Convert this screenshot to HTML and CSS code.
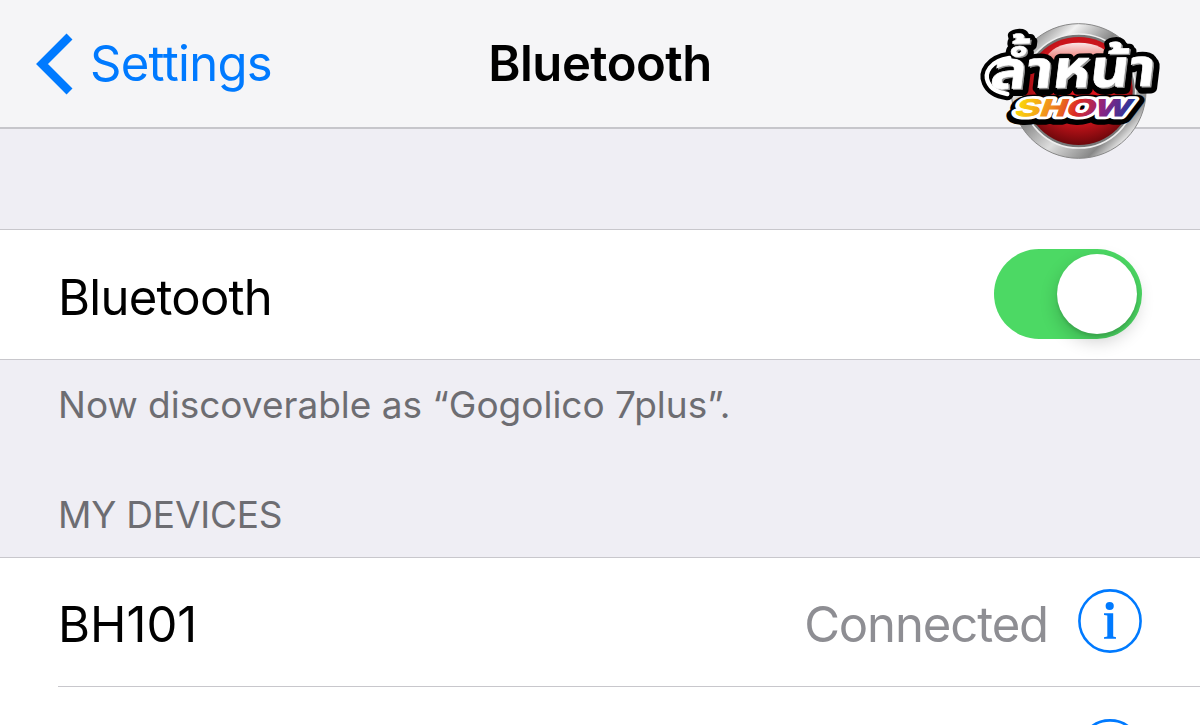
FILE: index.html
```html
<!DOCTYPE html>
<html lang="en">
<head>
    <meta charset="UTF-8">
    <meta name="viewport" content="width=device-width, initial-scale=1.0">
    <title>Bluetooth</title>
    <link rel="stylesheet" href="styles.css">
</head>
<body>
    <header class="navbar">
        <a href="#" class="back-link">
            <svg class="back-icon" viewBox="0 0 38 62" width="38" height="62">
                <path d="M34.5 3.5 7 31 34.5 58.5" fill="none" stroke="currentColor" stroke-width="8.4"/>
            </svg>
            <span class="back-label">Settings</span>
        </a>
        <h1 class="title">Bluetooth</h1>
        <svg class="show-logo" viewBox="0 0 600 480" width="200" height="160">
            <defs>
                <linearGradient id="chrome" x1="0" y1="0" x2="1" y2="1">
                    <stop offset="0.1" stop-color="#777"/>
                    <stop offset="0.25" stop-color="#f2f2f2"/>
                    <stop offset="0.42" stop-color="#888"/>
                    <stop offset="0.6" stop-color="#ddd"/>
                    <stop offset="0.78" stop-color="#888"/>
                    <stop offset="0.86" stop-color="#eee"/>
                    <stop offset="1" stop-color="#666"/>
                </linearGradient>
                <radialGradient id="red" cx="0.5" cy="0.4" r="0.6">
                    <stop offset="0" stop-color="#e8141c"/>
                    <stop offset="0.65" stop-color="#c9141b"/>
                    <stop offset="1" stop-color="#6d070b"/>
                </radialGradient>
                <linearGradient id="gloss" x1="0" y1="0" x2="0" y2="1">
                    <stop offset="0" stop-color="#fff" stop-opacity="0.9"/>
                    <stop offset="1" stop-color="#f56a50" stop-opacity="0.4"/>
                </linearGradient>
                <linearGradient id="rainbow" x1="0" y1="0" x2="1" y2="0">
                    <stop offset="0" stop-color="#fbd70b"/>
                    <stop offset="0.3" stop-color="#f08a1d"/>
                    <stop offset="0.52" stop-color="#dc2a24"/>
                    <stop offset="0.75" stop-color="#8b2483"/>
                    <stop offset="1" stop-color="#26379b"/>
                </linearGradient>
            </defs>
            <circle cx="326" cy="243" r="202" fill="url(#chrome)" stroke="#888" stroke-width="3"/>
            <circle cx="326" cy="243" r="171" fill="#777" stroke="#eee" stroke-width="5"/>
            <circle cx="326" cy="243" r="162" fill="url(#red)"/>
            <ellipse cx="326" cy="150" rx="96" ry="52" fill="url(#gloss)"/>
            <g class="logo-show" transform="translate(132 318) skewX(-20)">
                <text class="show-edge" x="3" y="7" textLength="342" lengthAdjust="spacingAndGlyphs">SHOW</text>
            </g>
            <!-- flourish on the left of the first letter -->
            <path class="swash-edge" d="M118 144C60 152 42 190 54 216 62 236 84 248 112 252"/>
            <g class="logo-thai" transform="translate(57 236) rotate(-1) skewX(-8)">
                <text class="thai-edge" x="8" y="9" textLength="494" lengthAdjust="spacingAndGlyphs">ล้ำหน้า</text>
                <text class="thai-edge" x="0" y="0" textLength="494" lengthAdjust="spacingAndGlyphs">ล้ำหน้า</text>
                <text class="thai-side" x="5" y="4" textLength="494" lengthAdjust="spacingAndGlyphs">ล้ำหน้า</text>
                <text class="thai-face" x="0" y="0" textLength="494" lengthAdjust="spacingAndGlyphs">ล้ำหน้า</text>
            </g>
            <path class="swash-face" d="M118 144C60 152 42 190 54 216 62 236 84 248 112 252"/>
            <g class="logo-show" transform="translate(132 318) skewX(-20)">
                <text class="show-rim" x="0" y="0" textLength="342" lengthAdjust="spacingAndGlyphs">SHOW</text>
                <text class="show-face" x="0" y="0" textLength="342" lengthAdjust="spacingAndGlyphs">SHOW</text>
            </g>
        </svg>
    </header>

    <main>
        <section class="group power-group">
            <div class="row">
                <span class="row-label">Bluetooth</span>
                <span class="switch"><span class="knob"></span></span>
            </div>
        </section>
        <p class="note">Now discoverable as “Gogolico 7plus”.</p>

        <h2 class="group-title">MY DEVICES</h2>
        <section class="group">
            <div class="row device">
                <span class="row-label device-name">BH101</span>
                <span class="status">Connected</span>
                <svg class="info-icon" viewBox="0 0 64 64" width="64" height="64">
                    <circle cx="32" cy="32" r="30.6" fill="none" stroke="currentColor" stroke-width="2.6"/>
                    <circle cx="31.7" cy="17" r="4.1" fill="currentColor"/>
                    <path d="M26 24.3H35.2V47.6L38 48.2V49.8H26V48.2L29.3 47.6V26.5L26 26Z" fill="currentColor"/>
                </svg>
            </div>
            <div class="row device">
                <svg class="info-icon" viewBox="0 0 64 64" width="64" height="64">
                    <circle cx="32" cy="32" r="30.6" fill="none" stroke="currentColor" stroke-width="2.6"/>
                    <circle cx="31.7" cy="17" r="4.1" fill="currentColor"/>
                    <path d="M26 24.3H35.2V47.6L38 48.2V49.8H26V48.2L29.3 47.6V26.5L26 26Z" fill="currentColor"/>
                </svg>
            </div>
        </section>
    </main>
</body>
</html>
```
FILE: styles.css
```css
* {
    box-sizing: border-box;
}

body {
    margin: 0;
    height: 725px;
    overflow: hidden;
    background-color: #efeef4;
    color: #000;
    font-family: Inter, "Liberation Sans", sans-serif;
    font-size: 49px;
    line-height: 60px;
}

/* Navigation bar */
.navbar {
    position: relative;
    display: grid;
    grid-template-columns: 1fr auto 1fr;
    align-items: center;
    height: 129px;
    padding: 0 35px;
    background-color: #f5f5f7;
    border-bottom: 2px solid #c6c6cb;
}
.back-link {
    display: flex;
    align-items: center;
    gap: 17px;
    color: #007aff;
    text-decoration: none;
    letter-spacing: -0.7px;
}
.title {
    margin: 0;
    padding-top: 1px;
    font-size: 49px;
    font-weight: 600;
    letter-spacing: -0.5px;
}

/* Logo sits over the bottom edge of the bar */
.show-logo {
    position: absolute;
    top: 10px;
    left: 970px;
}
.logo-thai {
    font-family: "Noto Sans Thai", "Noto Sans", sans-serif;
    font-size: 158px;
    font-weight: 700;
}
.thai-edge {
    fill: #000;
    stroke: #000;
    stroke-width: 28px;
    stroke-linejoin: round;
}
.thai-side {
    fill: #999;
    stroke: #999;
    stroke-width: 2px;
}
.thai-face {
    fill: #fff;
    stroke: #fff;
    stroke-width: 2px;
}
.swash-edge,
.swash-face {
    fill: none;
    stroke: #000;
    stroke-width: 38px;
    stroke-linecap: round;
}
.swash-face {
    stroke: #fff;
    stroke-width: 13px;
}
.logo-show {
    font-family: "Liberation Sans", sans-serif;
    font-size: 72px;
    font-weight: 700;
}
.show-edge {
    fill: #000;
    stroke: #000;
    stroke-width: 40px;
    stroke-linejoin: round;
}
.show-rim {
    fill: #fff;
    stroke: #fff;
    stroke-width: 20px;
    stroke-linejoin: round;
}
.show-face {
    fill: url(#rainbow);
    stroke: url(#rainbow);
    stroke-width: 3px;
}

/* Grouped list */
.group {
    background-color: #fff;
    border-top: 1px solid #c8c7cc;
}
.power-group {
    margin-top: 100px;
    border-bottom: 1px solid #c8c7cc;
}
.row {
    display: flex;
    align-items: center;
    height: 128px;
    padding: 0 58px;
}
.power-group .row {
    height: 129px;
    padding-bottom: 1px;
}
.row-label {
    flex: 1;
}
.power-group .row-label {
    padding-top: 8px;
    letter-spacing: -0.75px;
}

.switch {
    display: flex;
    justify-content: flex-end;
    width: 148px;
    height: 90px;
    padding: 5px;
    border-radius: 45px;
    background-color: #4cd964;
}
.knob {
    width: 80px;
    height: 80px;
    border-radius: 50%;
    background-color: #fff;
    box-shadow: 0 7px 18px rgba(0, 0, 0, 0.2), 0 3px 3px rgba(0, 0, 0, 0.1);
}

.note {
    margin: 0;
    padding: 15px 58px 0;
    color: #6d6d72;
    font-size: 37px;
}
.group-title {
    margin: 0;
    padding: 50px 58px 12px;
    color: #6d6d72;
    font-size: 37px;
    font-weight: 400;
    letter-spacing: -0.2px;
}

.device .row-label,
.status {
    padding-top: 6px;
}
.device .info-icon {
    margin-bottom: 2px;
}
.device + .device {
    margin-left: 58px;
    padding-left: 0;
    justify-content: flex-end;
    border-top: 1px solid #c8c7cc;
}
.device + .device .info-icon {
    margin-bottom: 0;
}
.status {
    margin-right: 30px;
    color: #8e8e93;
    letter-spacing: -1.1px;
}
.info-icon {
    color: #007aff;
}
```
